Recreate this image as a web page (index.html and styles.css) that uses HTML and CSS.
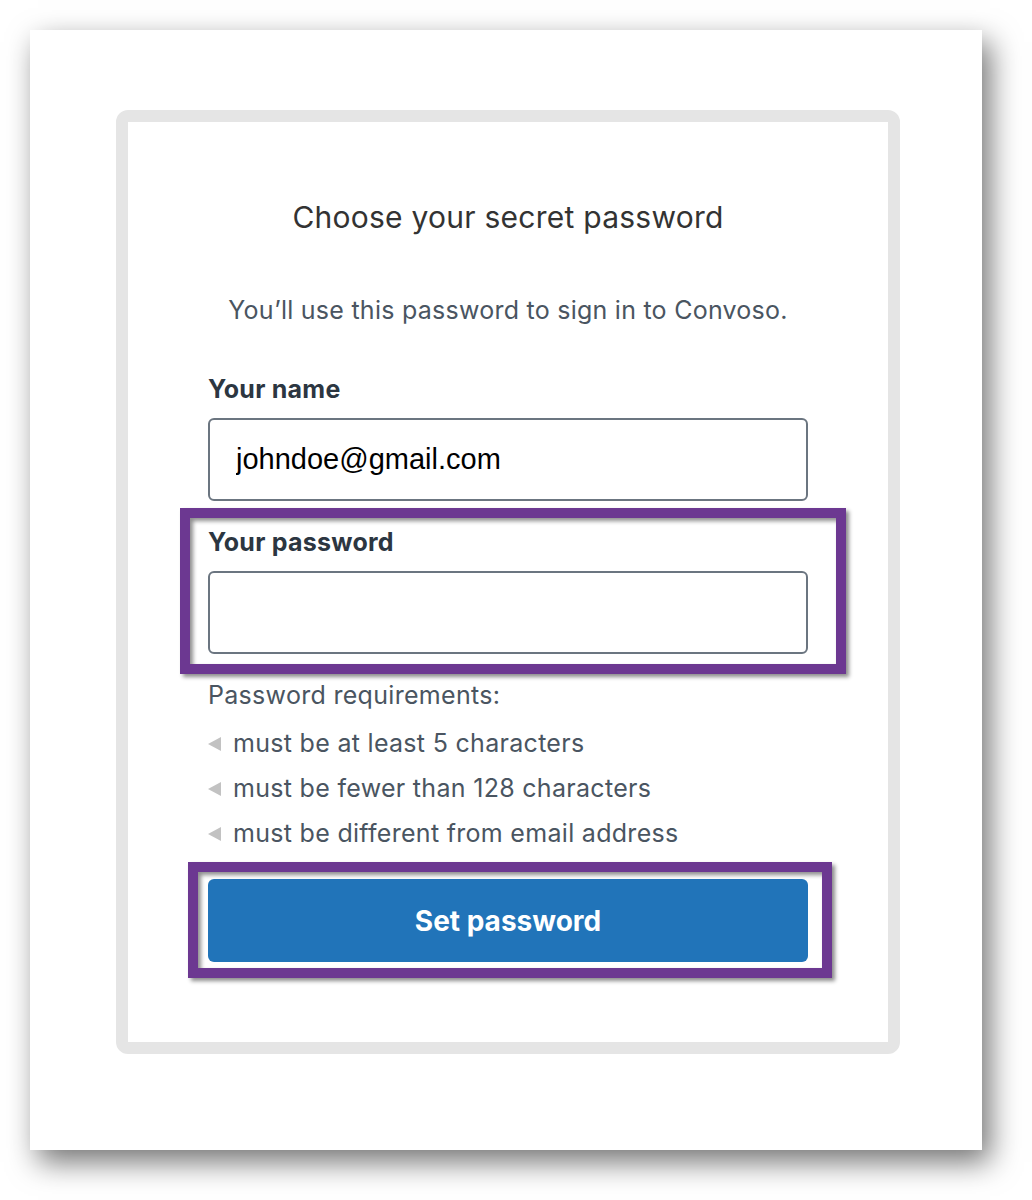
FILE: index.html
```html
<!DOCTYPE html>
<html lang="en">
<head>
    <meta charset="UTF-8">
    <meta name="viewport" content="width=device-width, initial-scale=1.0">
    <title>Choose your secret password</title>
    <link rel="stylesheet" href="styles.css">
</head>
<body>
    <div class="window">
        <div class="card">
            <h1 class="title">Choose your secret password</h1>
            <p class="subtitle">You’ll use this password to sign in to Convoso.</p>

            <div class="field">
                <label class="field-label" for="name">Your name</label>
                <input class="field-input" id="name" type="text" value="johndoe@gmail.com">
            </div>

            <div class="field field-password">
                <label class="field-label" for="password">Your password</label>
                <input class="field-input" id="password" type="password">
                <span class="mark mark-field"></span>
            </div>

            <div class="requirements">
                <p class="req-title">Password requirements:</p>
                <ul class="req-list">
                    <li>must be at least 5 characters</li>
                    <li>must be fewer than 128 characters</li>
                    <li>must be different from email address</li>
                </ul>
            </div>

            <div class="submit">
                <button class="btn" type="button">Set password</button>
                <span class="mark mark-btn"></span>
            </div>
        </div>
    </div>
</body>
</html>
```

FILE: styles.css
```css
body {
    margin: 0;
    background: #fff;
    font-family: Inter, 'Noto Sans', sans-serif;
    min-height: 1200px;
}

.window {
    margin: 30px 0 0 30px;
    width: 952px;
    height: 1120px;
    background: #fff;
    box-shadow: 8px 12px 28px rgba(0, 0, 0, 0.55);
    padding: 80px 0 0 86px;
    box-sizing: border-box;
}

.card {
    width: 784px;
    height: 944px;
    box-sizing: border-box;
    border: 12px solid #e5e5e5;
    border-radius: 12px;
    padding: 75px 80px 0 80px;
    display: flex;
    flex-direction: column;
}

.title {
    margin: 0;
    font-size: 30px;
    line-height: 40px;
    font-weight: 400;
    letter-spacing: 0.25px;
    color: #333;
    text-align: center;
}

.subtitle {
    margin: 58px 0 0;
    font-size: 25px;
    line-height: 30px;
    letter-spacing: 0.25px;
    color: #4a5561;
    text-align: center;
}

.field {
    display: flex;
    flex-direction: column;
    gap: 14px;
    margin-top: 49px;
}

.field-password {
    position: relative;
    margin-top: 26px;
}

.field-label {
    font-size: 25px;
    line-height: 30px;
    font-weight: 700;
    letter-spacing: 0.25px;
    color: #2c3641;
}

.field-input {
    height: 83px;
    box-sizing: border-box;
    border: 2px solid #6b7580;
    border-radius: 6px;
    padding: 0 26px;
    font-family: 'Liberation Sans', Arial, sans-serif;
    font-size: 29px;
    color: #000;
    background: #fff;
    outline: none;
}

.requirements {
    margin-top: 26px;
    color: #4a5561;
    font-size: 25px;
    letter-spacing: 0.3px;
}

.req-title {
    margin: 0;
    line-height: 30px;
}

.req-list {
    list-style: none;
    margin: 11px 0 0;
    padding: 0;
}

.req-list li {
    line-height: 45px;
    display: flex;
    align-items: center;
    gap: 12px;
}

.req-list li::before {
    content: "";
    width: 0;
    height: 0;
    border-top: 7px solid transparent;
    border-bottom: 7px solid transparent;
    border-right: 13px solid #c2c2c2;
}

.submit {
    position: relative;
    margin-top: 23px;
}

.btn {
    width: 100%;
    height: 83px;
    border: none;
    border-radius: 6px;
    background: #2174b9;
    color: #fff;
    font-family: Inter, 'Noto Sans', sans-serif;
    font-size: 28px;
    font-weight: 700;
}

/* purple annotation boxes drawn over the form */
.mark {
    position: absolute;
    border: 10px solid #6c3891;
    box-shadow: 3px 3px 4px rgba(0, 0, 0, 0.45), inset 3px 3px 4px rgba(0, 0, 0, 0.45);
    pointer-events: none;
}

.mark-field {
    top: -19px;
    left: -28px;
    right: -38px;
    bottom: -20px;
}

.mark-btn {
    top: -17px;
    left: -20px;
    right: -24px;
    bottom: -16px;
}
```
